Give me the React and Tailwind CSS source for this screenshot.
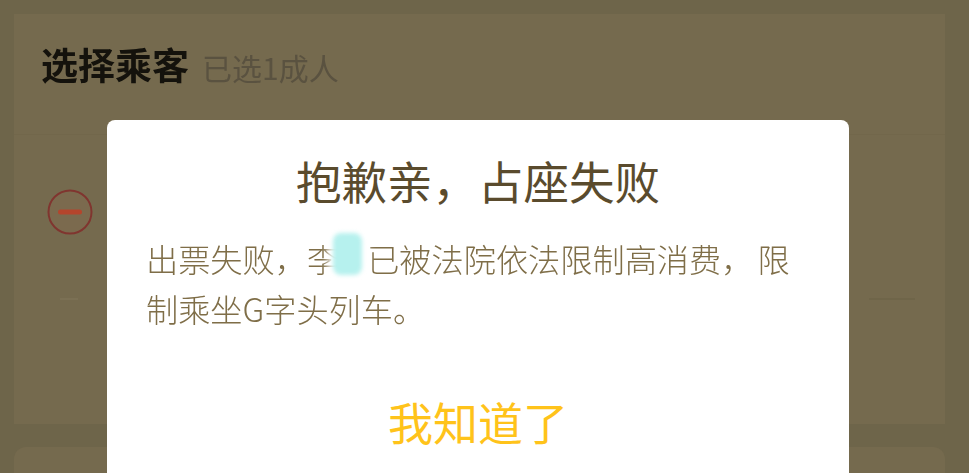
import React from 'react';

const font = { fontFamily: '"Noto Sans CJK SC", "Liberation Sans", sans-serif' };

const MinusIcon = () => (
  <svg width="48" height="48" viewBox="0 0 48 48" className="shrink-0 blur-[0.6px]">
    <circle cx="24" cy="24" r="21.5" fill="#7b6a4e" stroke="#80352f" strokeWidth="2" />
    <rect x="12" y="21.5" width="24" height="5" rx="2.5" fill="#b5452c" />
  </svg>
);

const App = () => {
  return (
    <div className="relative w-[973px] h-[473px] overflow-hidden bg-white" style={font}>
      <div className="w-[969px] h-[473px] bg-[#6e654a] pt-[14px] pl-[14px] pr-[24px] flex flex-col">
        <div className="h-[410px] shrink-0 bg-[#756a4e] flex flex-col">
          <div className="flex items-baseline h-[121px] pt-[21px] pl-[27px] border-b border-[#72674b]">
            <span className="text-[37px] leading-[58px] font-bold text-[#14120c] blur-[0.5px]">选择乘客</span>
            <span className="ml-[13px] text-[30px] leading-[58px] text-[#5a5240] blur-[0.7px]">已选1成人</span>
          </div>
          <div className="flex items-center pl-[32px] pt-[53px]">
            <MinusIcon />
          </div>
          <div className="flex justify-between pl-[46px] pr-[30px] mt-[62px]">
            <div className="w-[18px] h-[2px] bg-[#7b7054]" />
            <div className="w-[46px] h-[2px] bg-[#6f6549]" />
          </div>
        </div>
        <div className="mt-[23px] h-[40px] shrink-0 bg-[#756a4e] rounded-t-xl" />
      </div>

      {/* dialog */}
      <div className="absolute left-[107px] top-[120px] w-[742px] h-[380px] bg-white rounded-t-[8px] flex flex-col">
        <h2 className="mt-[27px] text-center text-[45.5px] leading-[66px] font-normal text-[#5a4b2d]">抱歉亲，占座失败</h2>
        <p className="relative mt-[20px] px-[39px] text-[32.2px] leading-[50px] font-light text-[#7f6e48] blur-[0.3px]">
          出票失败，李<span className="text-[28px] leading-[0] text-transparent">某</span>已被法院依法限制高消费，<span className="ml-[4px]">限</span>制乘坐G字头列车。
          <span className="absolute left-[226px] top-0 w-[29px] h-[42px] rounded-lg bg-[#b6f1ee] blur-[2px] shadow-[0_0_6px_5px_white]" />
        </p>
        <div className="mt-[57px] text-center text-[45px] leading-[64px] text-[#ffc31a]">我知道了</div>
      </div>
    </div>
  );
};

export default App;
